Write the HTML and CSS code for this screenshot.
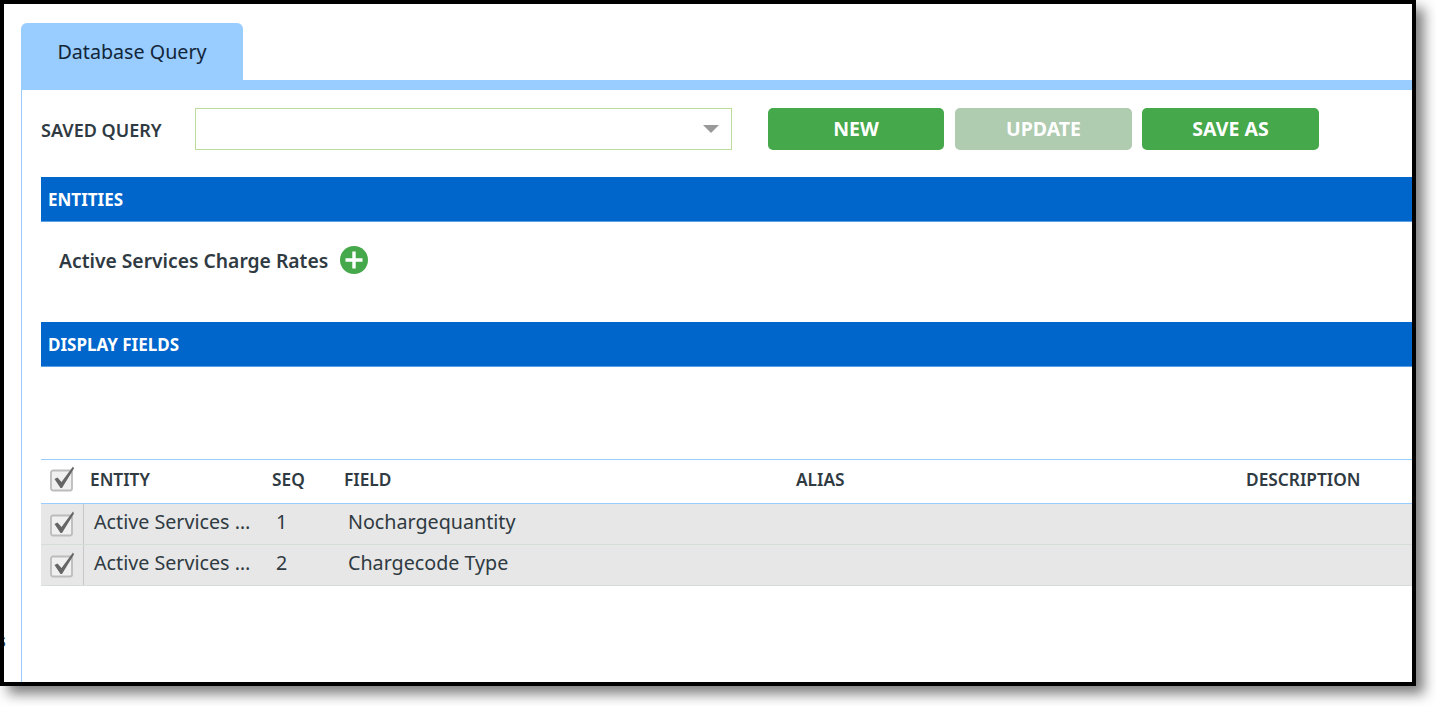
FILE: index.html
```html
<!DOCTYPE html>
<html>
<head>
    <link rel="stylesheet" href="styles.css">
</head>
<body>
    <div class="frame">
        <span class="stray">s</span>
        <div class="tab-bar">
            <div class="tab">Database Query</div>
        </div>
        <div class="panel">
            <div class="query-row">
                <label class="query-label">SAVED QUERY</label>
                <div class="select"><span class="select-arrow"></span></div>
                <div class="buttons">
                    <button class="btn">NEW</button>
                    <button class="btn btn-update">UPDATE</button>
                    <button class="btn btn-save">SAVE AS</button>
                </div>
            </div>

            <div class="section-bar">ENTITIES</div>
            <div class="entity-row">
                <span class="entity-name">Active Services Charge Rates</span>
                <svg class="add-icon" width="28" height="28" viewBox="0 0 28 28">
                    <circle cx="14" cy="14" r="14" fill="#45a84a"/>
                    <path d="M14 5.5v17M5.5 14h17" stroke="#fff" stroke-width="3.4" fill="none"/>
                </svg>
            </div>

            <div class="section-bar">DISPLAY FIELDS</div>

            <div class="grid">
                <div class="grid-row grid-head">
                    <div class="cell-check"><svg class="check" width="26" height="26" viewBox="0 0 26 26"><use href="#tick"/></svg></div>
                    <div>ENTITY</div>
                    <div>SEQ</div>
                    <div>FIELD</div>
                    <div>ALIAS</div>
                    <div>DESCRIPTION</div>
                </div>
                <div class="grid-row grid-item">
                    <div class="cell-check"><svg class="check" width="26" height="26" viewBox="0 0 26 26"><use href="#tick"/></svg></div>
                    <div class="cell-entity">Active Services Charge Rates</div>
                    <div>1</div>
                    <div>Nochargequantity</div>
                    <div></div>
                    <div></div>
                </div>
                <div class="grid-row grid-item">
                    <div class="cell-check"><svg class="check" width="26" height="26" viewBox="0 0 26 26"><use href="#tick"/></svg></div>
                    <div class="cell-entity">Active Services Charge Rates</div>
                    <div>2</div>
                    <div>Chargecode Type</div>
                    <div></div>
                    <div></div>
                </div>
            </div>
        </div>
    </div>

    <svg class="defs" width="0" height="0">
        <defs>
            <g id="tick">
                <rect x="2" y="4.5" width="21" height="20" rx="2" fill="#f0f0f0" stroke="#bcbcbc" stroke-width="1.8"/>
                <polygon points="5.5,13 8.5,11.5 12.5,16 24,0.5 25,2.5 13,22 11.5,22" fill="#666"/>
            </g>
        </defs>
    </svg>
</body>
</html>
```

FILE: styles.css
```css
html, body {
    margin: 0;
    background: #fff;
}
body {
    height: 706px;
    overflow: hidden;
    font-family: "Noto Sans", "Open Sans", Arial, sans-serif;
    color: #2f3a42;
}
.frame {
    position: relative;
    box-sizing: border-box;
    width: 1416px;
    height: 686px;
    border: 4px solid #000;
    background: #fff;
    padding: 19px 0 0 17px;
    overflow: hidden;
    box-shadow: 8px 8px 12px rgba(0, 0, 0, 0.5);
}
.stray {
    position: absolute;
    left: -7px;
    top: 624px;
    font-size: 18px;
    font-weight: 600;
}
.tab-bar {
    height: 57px;
}
.tab {
    width: 222px;
    height: 57px;
    box-sizing: border-box;
    padding-top: 16px;
    background: #9cf;
    border-radius: 6px 6px 0 0;
    color: #12263a;
    font-size: 19.7px;
    line-height: 26px;
    text-align: center;
}
.panel {
    height: 602px;
    box-sizing: border-box;
    border-top: 10px solid #9cf;
    border-left: 1px solid #9cf;
    padding: 18px 0 0 19px;
}
.query-row {
    display: flex;
    align-items: center;
    height: 42px;
}
.query-label {
    width: 154px;
    padding-top: 2px;
    font-size: 18px;
    font-weight: 600;
}
.select {
    display: flex;
    align-items: center;
    justify-content: flex-end;
    box-sizing: border-box;
    width: 537px;
    height: 42px;
    padding-right: 12px;
    border: 1px solid #bcdc9e;
}
.select-arrow {
    width: 0;
    height: 0;
    border-left: 8px solid transparent;
    border-right: 8px solid transparent;
    border-top: 8px solid #999;
}
.buttons {
    display: flex;
    gap: 11px;
    margin-left: 36px;
}
.btn {
    width: 176px;
    height: 42px;
    padding: 0 0 2px;
    border: 0;
    border-radius: 5px;
    background: #45a84a;
    color: #fff;
    font-family: inherit;
    font-size: 19.5px;
    font-weight: 700;
}
.btn-update {
    width: 177px;
    background: #afcbb0;
}
.btn-save {
    width: 177px;
    margin-left: -1px;
}
.section-bar {
    box-sizing: border-box;
    height: 45px;
    margin-top: 27px;
    padding: 10px 0 0 7px;
    background: #0066cc;
    border-bottom: 1px solid #5aa0e6;
    color: #fff;
    font-size: 17px;
    font-weight: 700;
    line-height: 26px;
}
.entity-row {
    display: flex;
    align-items: center;
    gap: 12px;
    height: 79px;
    margin-bottom: -4px;
    padding: 0 0 3px 18px;
    box-sizing: border-box;
    font-size: 19.3px;
    font-weight: 600;
}
.entity-row + .section-bar {
    margin-top: 25px;
}
.add-icon {
    display: block;
}
.grid {
    margin-top: 92px;
    border-top: 1px solid #9cf;
    font-size: 19.7px;
}
.grid-row {
    display: grid;
    grid-template-columns: 43px 182px 72px 452px 450px 1fr;
    align-items: center;
}
.grid-head {
    height: 43px;
    border-bottom: 1px solid #9cf;
    font-size: 17.3px;
    font-weight: 600;
}
.grid-head > div:not(.cell-check) {
    padding-left: 6px;
    padding-bottom: 4px;
}
.grid-head .check {
    margin-bottom: 5px;
}
.grid-item {
    height: 40px;
    background: #e7e7e7;
    border-bottom: 1px solid #d6dcd6;
}
.grid-item > div:not(.cell-check) {
    padding: 0 0 6px 10px;
    white-space: nowrap;
}
.grid-item > div.cell-entity {
    padding-right: 12px;
    overflow: hidden;
    text-overflow: ellipsis;
}
.grid-item .cell-check {
    border-right: 1px solid #c8c8c8;
    box-sizing: border-box;
    height: 100%;
}
.cell-check {
    display: flex;
    align-items: center;
    padding-left: 8px;
}
.check {
    display: block;
}
.defs {
    position: absolute;
}
```
